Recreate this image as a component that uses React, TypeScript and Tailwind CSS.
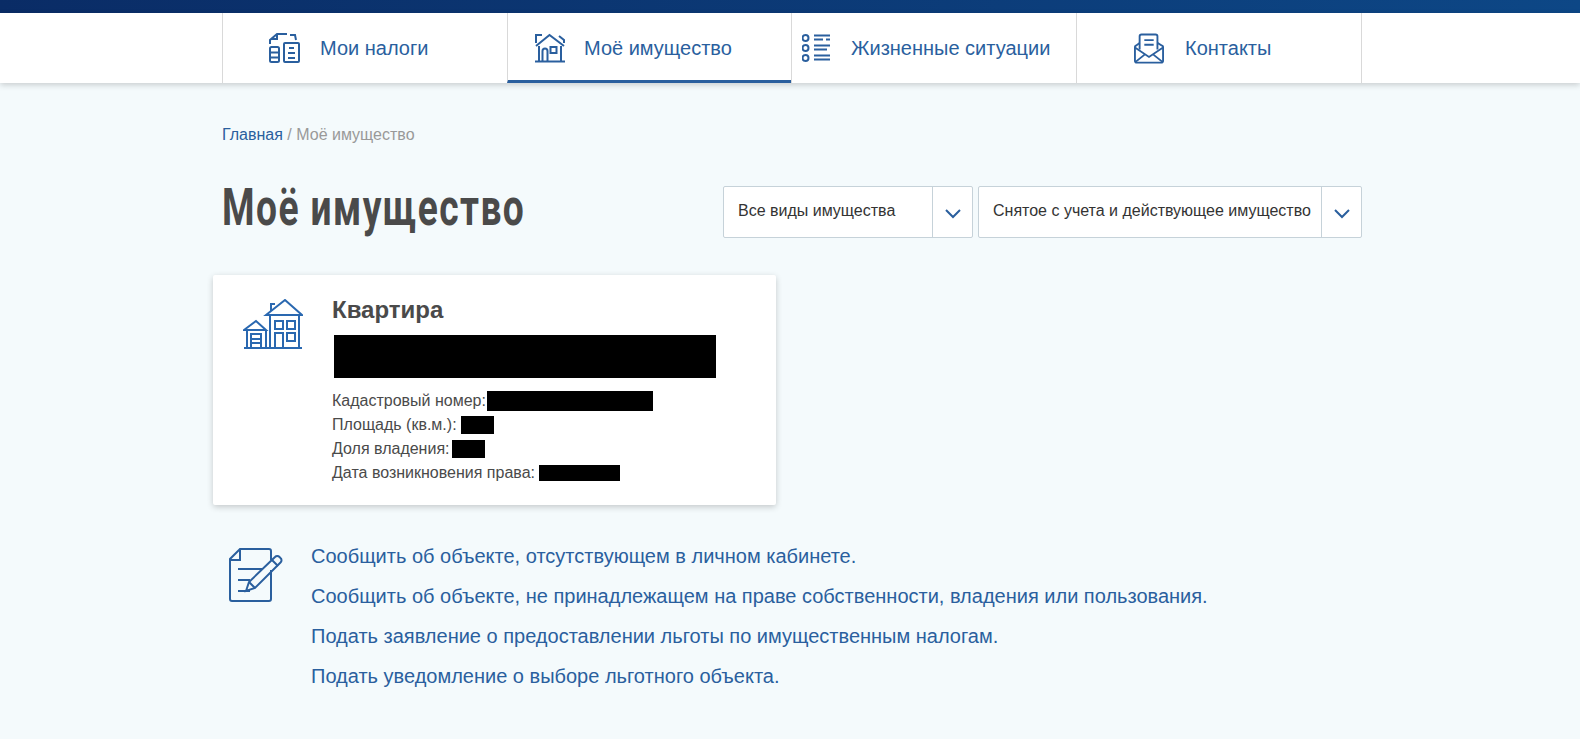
const TaxIcon = () => (
  <svg width="31" height="30" viewBox="0 0 31 30" fill="none" stroke="#2a5f9e" strokeWidth="2">
    <path d="M1 11V7l7-6h10" />
    <path d="M21 2h5l1 5" />
    <path d="M8 1v5H2" />
    <rect x="1" y="14" width="9" height="15" rx="1.500" />
    <path d="M1 19.500h9M1 24.500h9" />
    <rect x="15" y="10" width="15" height="19" rx="1" />
    <path d="M20 15h5M19 20h7M19 25h7" />
  </svg>
);

const HouseIcon = () => (
  <svg width="30" height="30" viewBox="0 0 30 30" fill="none" stroke="#2a5f9e" strokeWidth="2">
    <path d="M1 13 14.500 2 29 13" />
    <path d="M1 10V2h6M24 3l5 4v3" />
    <path d="M4 13v15M26 13v15" />
    <path d="M0 28.500h30" />
    <path d="M7.500 28V18a2.500 2.500 0 0 1 5 0v10" />
    <rect x="15.500" y="14" width="6" height="6" />
  </svg>
);

const ListIcon = () => (
  <svg width="28" height="28" viewBox="0 0 28 28" fill="none" stroke="#2a5f9e" strokeWidth="2">
    <circle cx="3.500" cy="4" r="3" />
    <circle cx="3.500" cy="14" r="3" />
    <circle cx="3.500" cy="24" r="3" />
    <path d="M12 1.500h16M12 5.500h9M24 5.500h4M12 11.500h16M12 15.500h13M12 21.500h16M12 25.500h16" />
  </svg>
);

const MailIcon = () => (
  <svg width="30" height="31" viewBox="0 0 32 32" fill="none" stroke="#2a5f9e" strokeWidth="2">
    <path d="M6 17V3a2 2 0 0 1 2-2h15a2 2 0 0 1 2 2v14" />
    <path d="M11 7h10M11 12h10" />
    <path d="M6 10l-4 3a2 2 0 0 0-1 2v14a2 2 0 0 0 2 2h26a2 2 0 0 0 2-2V15a2 2 0 0 0-1-2l-5-3" />
    <path d="M1 15l15 10 15-10M2 30l10-8M30 30l-10-8" />
  </svg>
);

const BuildingIcon = () => (
  <svg width="60" height="50" viewBox="0 0 60 50" fill="none" stroke="#2a68b0" strokeWidth="2">
    <path d="M23 16 42 1l17 15z" />
    <path d="M28 12V5h4" />
    <path d="M27 16v32M56 16v32" />
    <path d="M1 49h58" />
    <path d="M1 31 13 22l10 9z" />
    <path d="M4 31v18M23 31v18" />
    <path d="M8 49V35h10v14M8 40h10M8 44h10" />
    <rect x="32" y="22" width="8" height="8" />
    <rect x="44" y="22" width="8" height="8" />
    <rect x="44" y="34" width="8" height="8" />
    <path d="M32 49V34h8v15" />
  </svg>
);

const NoteIcon = () => (
  <svg width="54" height="54" viewBox="0 0 54 54" fill="none" stroke="#2a5f9e" strokeWidth="2">
    <path d="M42 22v29a2 2 0 0 1-2 2H3a2 2 0 0 1-2-2V11L11 1h29a2 2 0 0 1 2 2v9" />
    <path d="M1 12h10V1" />
    <path d="M9 21h24M9 32h12M9 43h12" />
    <path d="M17 43l3-9L46 9a3 3 0 0 1 4.500 0l1 1a3 3 0 0 1 0 4.500L26 40z" />
    <path d="M20 34l6 6M43 12l6 6" />
  </svg>
);

const Chevron = () => (
  <svg width="16" height="10" viewBox="0 0 16 10" fill="none" stroke="#2a5f9e" strokeWidth="2">
    <path d="M1 1l7 7 7-7" />
  </svg>
);

const navItems = [
  { title: "Мои налоги", icon: <TaxIcon />, pad: "pl-[46px] gap-[20px]" },
  { title: "Моё имущество", icon: <HouseIcon />, pad: "pl-[27px] gap-[19px]", active: true },
  { title: "Жизненные ситуации", icon: <ListIcon />, pad: "pl-[10px] gap-[21px]" },
  { title: "Контакты", icon: <MailIcon />, pad: "pl-[57px] gap-[21px]" },
];

const links = [
  "Сообщить об объекте, отсутствующем в личном кабинете.",
  "Сообщить об объекте, не принадлежащем на праве собственности, владения или пользования.",
  "Подать заявление о предоставлении льготы по имущественным налогам.",
  "Подать уведомление о выборе льготного объекта.",
];

const App = () => {
  return (
    <div className="min-h-screen bg-[#f4fafc] font-['Liberation_Sans',Arial,sans-serif] text-[#4a4a4a] overflow-hidden">
      <div className="h-[13px] bg-gradient-to-r from-[#0a2c66] to-[#0d4786]" />
      <nav className="h-[70px] bg-white shadow-[0_2px_6px_rgba(0,0,0,0.18)]">
        <div className="ml-[222px] grid h-full w-[1140px] grid-cols-[285px_284px_285px_285px] border-r border-[#d9d9d9]">
          {navItems.map((item) => (
            <a
              key={item.title}
              className={`flex h-full items-center border-l border-[#d9d9d9] text-[20px] text-[#2a5f9e] ${item.pad} ${
                item.active ? "border-b-[3px] border-b-[#2a5f9e] pt-[3px]" : ""
              }`}
            >
              {item.icon}
              <span>{item.title}</span>
            </a>
          ))}
        </div>
      </nav>

      <main className="ml-[222px] w-[1140px]">
        <div className="mt-[42px] text-[16px] leading-5 text-[#999999]">
          <a className="text-[#2a5f9e]">Главная</a> / Моё имущество
        </div>

        <div className="mt-[31px] flex h-[72px] items-center justify-between">
          <h1 className="-mt-[8px] origin-left scale-x-[0.715] whitespace-nowrap font-['Roboto',sans-serif] text-[52px] font-bold leading-none tracking-[2px] text-[#4a4a4a]">
            Моё имущество
          </h1>
          <div className="flex gap-[5px] text-[16px] text-[#333333]">
            <div className="flex h-[52px] w-[250px] items-center rounded-[2px] border border-[#c6d2d9] bg-white">
              <span className="-mt-[2px] flex-1 pl-[14px]">Все виды имущества</span>
              <span className="flex h-full w-[40px] items-center justify-center border-l border-[#c6d2d9] pt-[4px]">
                <Chevron />
              </span>
            </div>
            <div className="flex h-[52px] w-[384px] items-center rounded-[2px] border border-[#c6d2d9] bg-white">
              <span className="-mt-[2px] flex-1 pl-[14px]">Снятое с учета и действующее имущество</span>
              <span className="flex h-full w-[40px] items-center justify-center border-l border-[#c6d2d9] pt-[4px]">
                <Chevron />
              </span>
            </div>
          </div>
        </div>

        <div className="mt-[27px] -ml-[9px] flex h-[230px] w-[563px] rounded-[2px] bg-white pl-[30px] pt-[21px] shadow-[0_2px_6px_rgba(0,0,0,0.2)]">
          <div className="mt-[3px]">
            <BuildingIcon />
          </div>
          <div className="ml-[29px]">
            <div className="text-[24px] font-bold leading-7 text-[#4a4a4a]">Квартира</div>
            <div className="mt-[11px] ml-[2px] h-[43px] w-[382px] bg-black" />
            <div className="mt-[11px] text-[16px] leading-[24px]">
              <div className="flex items-center">
                Кадастровый номер:<span className="ml-[1px] h-[20px] w-[166px] bg-black" />
              </div>
              <div className="flex items-center">
                Площадь (кв.м.):<span className="ml-1 h-[18px] w-[33px] bg-black" />
              </div>
              <div className="flex items-center">
                Доля владения:<span className="ml-[2px] h-[18px] w-[33px] bg-black" />
              </div>
              <div className="flex items-center">
                Дата возникновения права:<span className="ml-1 h-[16px] w-[81px] bg-black" />
              </div>
            </div>
          </div>
        </div>

        <div className="mt-[31px] flex">
          <div className="ml-[7px] mt-[12px]">
            <NoteIcon />
          </div>
          <ul className="ml-[28px] text-[20px] leading-[40px] text-[#2a5f9e]">
            {links.map((link) => (
              <li key={link}>{link}</li>
            ))}
          </ul>
        </div>
      </main>
    </div>
  );
};

export default App;
